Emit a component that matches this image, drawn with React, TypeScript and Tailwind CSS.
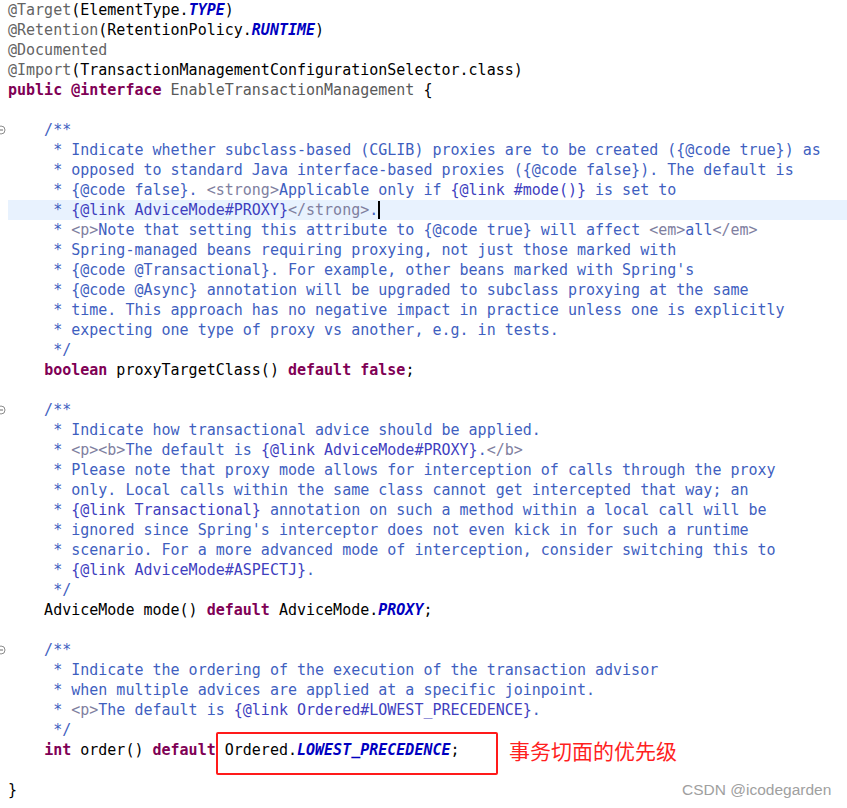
import React from "react";

type Seg = [string, string];

const A = "text-[#646464]";
const N = "text-[#000000]";
const K = "text-[#7f0055] font-bold";
const C = "text-[#0000c0] font-bold italic";
const G = "text-[#5a5a5a]";
const J = "text-[#3f5fbf]";
const H = "text-[#7f7f9f]";
const L = "text-[#3f3fbf]";

function jdoc(s: string): Seg[] {
  const out: Seg[] = [];
  const re = /(<[^>]+>)|(\{@link [^}]+\})/g;
  let last = 0;
  let m: RegExpExecArray | null;
  while ((m = re.exec(s))) {
    if (m.index > last) out.push([s.slice(last, m.index), J]);
    out.push([m[0], m[1] ? H : L]);
    last = m.index + m[0].length;
  }
  if (last < s.length) out.push([s.slice(last), J]);
  return out;
}

const lines: Seg[][] = [
  [["@Target", A], ["(ElementType.", N], ["TYPE", C], [")", N]],
  [["@Retention", A], ["(RetentionPolicy.", N], ["RUNTIME", C], [")", N]],
  [["@Documented", A]],
  [["@Import", A], ["(TransactionManagementConfigurationSelector.class)", N]],
  [["public @interface", K], [" EnableTransactionManagement", G], [" {", N]],
  [],
  jdoc("    /**"),
  jdoc("     * Indicate whether subclass-based (CGLIB) proxies are to be created ({@code true}) as"),
  jdoc("     * opposed to standard Java interface-based proxies ({@code false}). The default is"),
  jdoc("     * {@code false}. <strong>Applicable only if {@link #mode()} is set to"),
  jdoc("     * {@link AdviceMode#PROXY}</strong>."),
  jdoc("     * <p>Note that setting this attribute to {@code true} will affect <em>all</em>"),
  jdoc("     * Spring-managed beans requiring proxying, not just those marked with"),
  jdoc("     * {@code @Transactional}. For example, other beans marked with Spring's"),
  jdoc("     * {@code @Async} annotation will be upgraded to subclass proxying at the same"),
  jdoc("     * time. This approach has no negative impact in practice unless one is explicitly"),
  jdoc("     * expecting one type of proxy vs another, e.g. in tests."),
  jdoc("     */"),
  [["    ", N], ["boolean", K], [" proxyTargetClass() ", N], ["default false", K], [";", N]],
  [],
  jdoc("    /**"),
  jdoc("     * Indicate how transactional advice should be applied."),
  jdoc("     * <p><b>The default is {@link AdviceMode#PROXY}.</b>"),
  jdoc("     * Please note that proxy mode allows for interception of calls through the proxy"),
  jdoc("     * only. Local calls within the same class cannot get intercepted that way; an"),
  jdoc("     * {@link Transactional} annotation on such a method within a local call will be"),
  jdoc("     * ignored since Spring's interceptor does not even kick in for such a runtime"),
  jdoc("     * scenario. For a more advanced mode of interception, consider switching this to"),
  jdoc("     * {@link AdviceMode#ASPECTJ}."),
  jdoc("     */"),
  [["    AdviceMode mode() ", N], ["default", K], [" AdviceMode.", N], ["PROXY", C], [";", N]],
  [],
  jdoc("    /**"),
  jdoc("     * Indicate the ordering of the execution of the transaction advisor"),
  jdoc("     * when multiple advices are applied at a specific joinpoint."),
  jdoc("     * <p>The default is {@link Ordered#LOWEST_PRECEDENCE}."),
  jdoc("     */"),
  [["    ", N], ["int", K], [" order() ", N], ["default", K], [" Ordered.", N], ["LOWEST_PRECEDENCE", C], [";", N]],
  [],
  [["}", N]],
];

const folds = new Set([6, 20, 32]);

function FoldIcon() {
  return (
    <svg className="absolute left-[-4px] top-[5px]" width="10" height="10" viewBox="0 0 10 10">
      <circle cx="5" cy="5" r="4" fill="#ffffff" stroke="#8c8c8c" strokeWidth="1" />
      <line x1="3" y1="5" x2="7" y2="5" stroke="#6c6c6c" strokeWidth="1" />
    </svg>
  );
}

export default function App() {
  return (
    <div className="relative w-[847px] h-[808px] overflow-hidden bg-white">
      <div className="flex flex-col font-['DejaVu_Sans_Mono',monospace] text-[15px] leading-[20px]">
        {lines.map((segs, i) => (
          <div key={i} className="relative h-[20px] whitespace-pre">
            {folds.has(i) && <FoldIcon />}
            <div className={i === 10 ? "ml-[8px] bg-[#e8f2fe] h-[20px]" : "ml-[8px] h-[20px]"}>
              {segs.map(([t, c], j) => (
                <span key={j} className={c}>
                  {t}
                </span>
              ))}
              {i === 10 && <span className="inline-block align-top mt-[1px] w-[1.5px] h-[18px] bg-black" />}
            </div>
            {i === 37 && (
              <>
                <div className="absolute left-[216px] top-[-8px] w-[282px] h-[43px] border-2 border-[#ff1a1a] rounded-[2px]" />
                <div className="absolute left-[509px] top-[-3px] leading-[26px] text-[21px] text-[#ff1f1f] font-['Noto_Sans_CJK_SC',sans-serif]">
                  事务切面的优先级
                </div>
              </>
            )}
          </div>
        ))}
      </div>
      <div className="absolute left-[682px] top-[780px] text-[15.5px] leading-[20px] text-[#a0a0a0] font-['Liberation_Sans',sans-serif]">
        CSDN @icodegarden
      </div>
    </div>
  );
}
